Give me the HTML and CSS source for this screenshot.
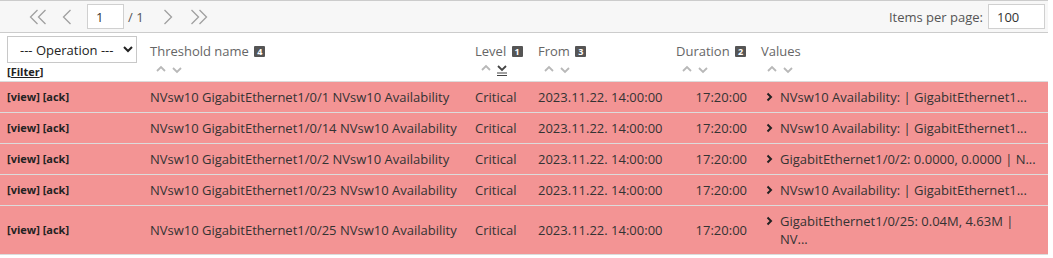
FILE: index.html
```html
<!DOCTYPE html>
<html lang="en">

<head>
    <meta charset="utf-8">
    <title>Threshold alerts</title>
    <link rel="stylesheet" href="styles.css">
</head>

<body>
    <div class="page">
        <div class="pager">
            <span class="pg-btn pg-first">
                <svg width="18" height="16" viewBox="0 0 18 16"><polyline points="8.5,1 1.5,8 8.5,15" /><polyline points="16.5,1 9.5,8 16.5,15" /></svg>
            </span>
            <span class="pg-btn pg-prev">
                <svg width="10" height="16" viewBox="0 0 10 16"><polyline points="8.5,1 1.5,8 8.5,15" /></svg>
            </span>
            <input class="pg-input" type="text" value="1">
            <span class="pg-total">/ 1</span>
            <span class="pg-btn pg-next">
                <svg width="10" height="16" viewBox="0 0 10 16"><polyline points="1.5,1 8.5,8 1.5,15" /></svg>
            </span>
            <span class="pg-btn pg-last">
                <svg width="18" height="16" viewBox="0 0 18 16"><polyline points="1.5,1 8.5,8 1.5,15" /><polyline points="9.5,1 16.5,8 9.5,15" /></svg>
            </span>
            <span class="pg-fill"></span>
            <label class="pg-label">Items per page:</label>
            <input class="pg-size" type="text" value="100">
        </div>

        <table class="alerts">
            <colgroup>
                <col class="c-op">
                <col class="c-name">
                <col class="c-level">
                <col class="c-from">
                <col class="c-dur">
                <col class="c-values">
            </colgroup>
            <thead>
                <tr>
                    <th class="th-op">
                        <select class="op-select">
                            <option>--- Operation ---</option>
                        </select>
                        <div class="filter">[<a href="#">Filter</a>]</div>
                    </th>
                    <th>
                        <div class="th-label">Threshold name <span class="badge">4</span></div>
                        <div class="sorter">
                            <svg width="26" height="10" viewBox="0 0 26 10"><polyline class="s-off" points="1,6 5,2 9,6" /><polyline class="s-off" points="17,3 21,7 25,3" /></svg>
                        </div>
                    </th>
                    <th>
                        <div class="th-label">Level <span class="badge">1</span></div>
                        <div class="sorter">
                            <svg width="26" height="12" viewBox="0 0 26 12"><polyline class="s-off" points="1,6 5,2 9,6" /><polyline class="s-on" points="17,2 21,6 25,2" /><line class="s-bar" x1="16" y1="9" x2="26" y2="9" /><line class="s-bar" x1="16" y1="11.5" x2="26" y2="11.5" /></svg>
                        </div>
                    </th>
                    <th>
                        <div class="th-label">From <span class="badge">3</span></div>
                        <div class="sorter">
                            <svg width="26" height="10" viewBox="0 0 26 10"><polyline class="s-off" points="1,6 5,2 9,6" /><polyline class="s-off" points="17,3 21,7 25,3" /></svg>
                        </div>
                    </th>
                    <th>
                        <div class="th-label">Duration <span class="badge">2</span></div>
                        <div class="sorter">
                            <svg width="26" height="10" viewBox="0 0 26 10"><polyline class="s-off" points="1,6 5,2 9,6" /><polyline class="s-off" points="17,3 21,7 25,3" /></svg>
                        </div>
                    </th>
                    <th>
                        <div class="th-label">Values</div>
                        <div class="sorter">
                            <svg width="26" height="10" viewBox="0 0 26 10"><polyline class="s-off" points="1,6 5,2 9,6" /><polyline class="s-off" points="17,3 21,7 25,3" /></svg>
                        </div>
                    </th>
                </tr>
            </thead>
            <tbody>
                <tr class="critical">
                    <td class="actions"><a href="#">[view]</a> <a href="#">[ack]</a></td>
                    <td>NVsw10 GigabitEthernet1/0/1 NVsw10 Availability</td>
                    <td>Critical</td>
                    <td>2023.11.22. 14:00:00</td>
                    <td class="dur">17:20:00</td>
                    <td><div class="values"><span class="caret"><svg width="7" height="10" viewBox="0 0 7 10"><polyline points="1.5,1.5 5,5 1.5,8.5" /></svg></span><span>NVsw10 Availability: | GigabitEthernet1...</span></div></td>
                </tr>
                <tr class="critical">
                    <td class="actions"><a href="#">[view]</a> <a href="#">[ack]</a></td>
                    <td>NVsw10 GigabitEthernet1/0/14 NVsw10 Availability</td>
                    <td>Critical</td>
                    <td>2023.11.22. 14:00:00</td>
                    <td class="dur">17:20:00</td>
                    <td><div class="values"><span class="caret"><svg width="7" height="10" viewBox="0 0 7 10"><polyline points="1.5,1.5 5,5 1.5,8.5" /></svg></span><span>NVsw10 Availability: | GigabitEthernet1...</span></div></td>
                </tr>
                <tr class="critical">
                    <td class="actions"><a href="#">[view]</a> <a href="#">[ack]</a></td>
                    <td>NVsw10 GigabitEthernet1/0/2 NVsw10 Availability</td>
                    <td>Critical</td>
                    <td>2023.11.22. 14:00:00</td>
                    <td class="dur">17:20:00</td>
                    <td><div class="values"><span class="caret"><svg width="7" height="10" viewBox="0 0 7 10"><polyline points="1.5,1.5 5,5 1.5,8.5" /></svg></span><span>GigabitEthernet1/0/2: 0.0000, 0.0000 | N...</span></div></td>
                </tr>
                <tr class="critical">
                    <td class="actions"><a href="#">[view]</a> <a href="#">[ack]</a></td>
                    <td>NVsw10 GigabitEthernet1/0/23 NVsw10 Availability</td>
                    <td>Critical</td>
                    <td>2023.11.22. 14:00:00</td>
                    <td class="dur">17:20:00</td>
                    <td><div class="values"><span class="caret"><svg width="7" height="10" viewBox="0 0 7 10"><polyline points="1.5,1.5 5,5 1.5,8.5" /></svg></span><span>NVsw10 Availability: | GigabitEthernet1...</span></div></td>
                </tr>
                <tr class="critical">
                    <td class="actions"><a href="#">[view]</a> <a href="#">[ack]</a></td>
                    <td>NVsw10 GigabitEthernet1/0/25 NVsw10 Availability</td>
                    <td>Critical</td>
                    <td>2023.11.22. 14:00:00</td>
                    <td class="dur">17:20:00</td>
                    <td><div class="values"><span class="caret"><svg width="7" height="10" viewBox="0 0 7 10"><polyline points="1.5,1.5 5,5 1.5,8.5" /></svg></span><span>GigabitEthernet1/0/25: 0.04M, 4.63M | NV...</span></div></td>
                </tr>
            </tbody>
        </table>
    </div>
</body>

</html>
```

FILE: styles.css
```css
:root {
    --line: #cccccc;
    --row-line: #dcdcdc;
    --critical: #f39494;
    --text: #333333;
    --head: #666666;
}

body {
    margin: 0;
    font-family: 'Open Sans', 'Liberation Sans', sans-serif;
    font-size: 13px;
    color: var(--text);
    background: #fff;
}

.page {
    width: 1048px;
}

/* pager bar */

.pager {
    display: flex;
    align-items: center;
    height: 31px;
    background: #f7f7f7;
    border-top: 1px solid var(--line);
    border-bottom: 1px solid var(--line);
    padding-right: 3px;
}

.pg-btn {
    display: flex;
    align-items: center;
}

.pg-btn svg polyline {
    fill: none;
    stroke: #a0a0a0;
    stroke-width: 1.3;
}

.pg-first {
    margin-left: 29px;
}

.pg-prev {
    margin-left: 15px;
}

.pg-input,
.pg-size {
    box-sizing: border-box;
    height: 25px;
    border: 1px solid #d0d0d0;
    background: #fff;
    font-family: inherit;
    font-size: 13px;
    color: var(--text);
    padding: 0 8px;
    outline: none;
}

.pg-input {
    width: 37px;
    margin-left: 15px;
}

.pg-total {
    margin-left: 4px;
    color: #555;
}

.pg-next {
    margin-left: 19px;
}

.pg-last {
    margin-left: 17px;
}

.pg-fill {
    flex: 1;
}

.pg-label {
    color: #555;
}

.pg-size {
    width: 57px;
    margin-left: 5px;
}

/* table */

.alerts {
    width: 100%;
    table-layout: fixed;
    border-collapse: collapse;
}

.c-op { width: 143px; }
.c-name { width: 325px; }
.c-level { width: 63px; }
.c-from { width: 138px; }
.c-dur { width: 85px; }

.alerts th {
    text-align: left;
    vertical-align: top;
    font-weight: normal;
    color: var(--head);
    padding: 9px 7px 3px;
}

.alerts th.th-op {
    padding: 3px 7px 2px;
}

.op-select {
    display: block;
    width: 130px;
    height: 27px;
    font-family: inherit;
    font-size: 13px;
    color: #222;
    background: #fff;
    border: 1px solid #c8c8c8;
    padding: 0 4px 0 8px;
}

.filter {
    margin-top: 2px;
    font-size: 11px;
    font-weight: bold;
    line-height: 14px;
    color: #222;
}

.filter a {
    color: #222;
}

.th-label {
    line-height: 18px;
    white-space: nowrap;
}

.badge {
    display: inline-block;
    width: 11px;
    height: 11px;
    line-height: 11px;
    background: #555;
    color: #fff;
    font-size: 9px;
    font-weight: bold;
    text-align: center;
    border-radius: 1px;
    margin-left: 2px;
    vertical-align: 1px;
}

.sorter {
    height: 18px;
    padding-left: 6px;
    display: flex;
    align-items: center;
}

.sorter svg {
    margin-top: 2px;
}

.s-off,
.s-on {
    fill: none;
    stroke-width: 1.8;
}

.s-off {
    stroke: #b8b8b8;
}

.s-on {
    stroke: #444;
}

.s-bar {
    stroke: #444;
    stroke-width: 1;
}

.alerts td {
    padding: 6px 7px;
    line-height: 18px;
    vertical-align: middle;
    border-top: 1px solid var(--row-line);
    white-space: nowrap;
}

.alerts tbody tr:last-child td {
    border-bottom: 1px solid var(--row-line);
}

.critical {
    background: var(--critical);
}

.actions {
    font-size: 11px;
    font-weight: bold;
}

.actions a {
    color: #222;
    text-decoration: none;
}

.alerts td.dur {
    text-align: right;
}

.alerts td:last-child {
    white-space: normal;
    padding-right: 12px;
}

.values {
    display: flex;
}

.caret {
    flex: none;
    width: 19px;
    height: 18px;
    padding-left: 5px;
    box-sizing: border-box;
    display: flex;
    align-items: center;
}

.caret svg polyline {
    fill: none;
    stroke: #222;
    stroke-width: 2;
}
```
